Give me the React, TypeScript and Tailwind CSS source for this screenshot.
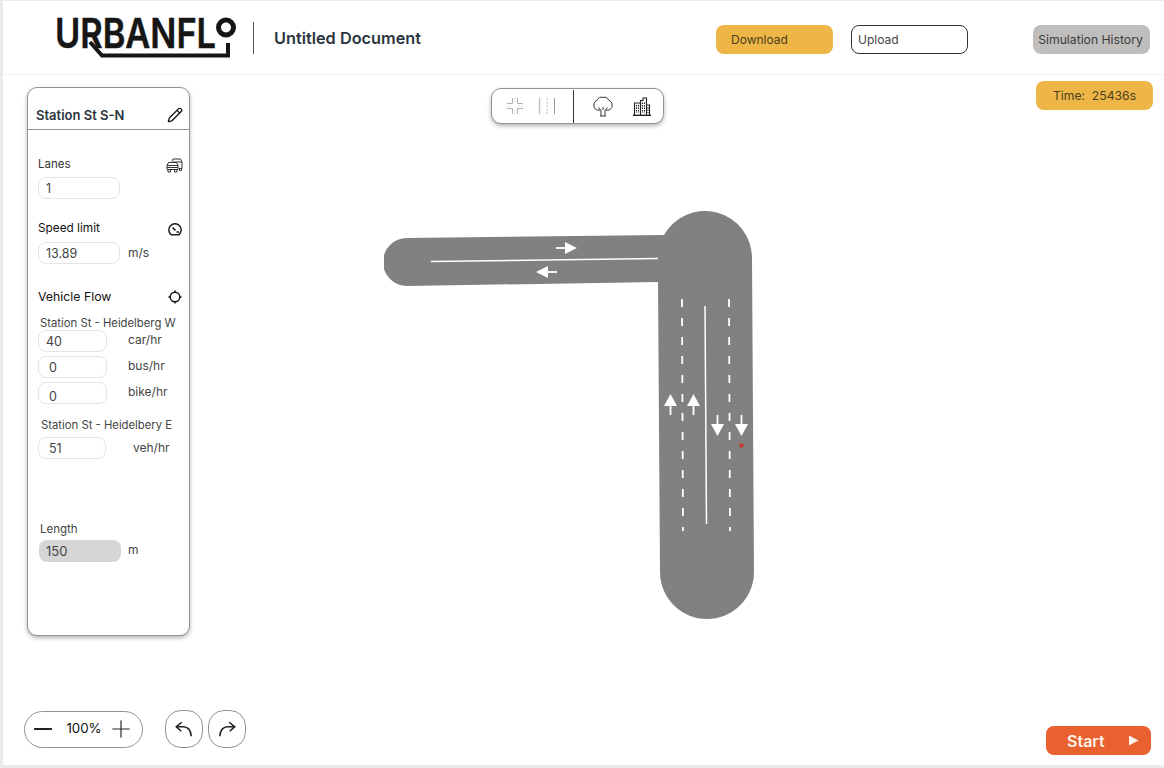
import { Minus, Pencil, Plus } from "lucide-react";

function Logo() {
  return (
    <svg width="190" height="52" viewBox="50 13 190 52" className="shrink-0 overflow-visible">
      <text
        x="55"
        y="49"
        fontFamily="Inter, sans-serif"
        fontSize="41"
        fontWeight="600"
        textLength="161"
        lengthAdjust="spacingAndGlyphs"
        fill="#161616"
        stroke="#161616"
        strokeWidth="0.500"
      >
        URBANFL
      </text>
      <circle cx="226" cy="28.500" r="7.500" fill="none" stroke="#161616" strokeWidth="5" />
      <path d="M90 43 L102 56.500 H228 V44" fill="none" stroke="#161616" strokeWidth="4" />
    </svg>
  );
}

function CarsIcon() {
  return (
    <svg width="17" height="15" viewBox="0 0 17 15" fill="none" stroke="#333" strokeWidth="1">
      <path d="M6 3.500 L7 1 H14.500 L16 4 V10.500 H13" />
      <path d="M13.500 10.500 V12.500 H15.500 V10.500 M7 4 H16" />
      <path d="M1 7.500 L2.500 4.500 H10.500 L12 7.500 V11.500 H1 Z" fill="#fff" />
      <path d="M1 7.500 H12 M1 9.500 H12" />
      <path d="M2 11.500 V14 H4.500 V11.500 M8.500 11.500 V14 H11 V11.500" />
    </svg>
  );
}

function GaugeIcon() {
  return (
    <svg width="14" height="13" viewBox="0 0 14 13" fill="none" stroke="#222" strokeWidth="1.500">
      <path d="M3.200 11.800 H10.800 A6.200 6.200 0 1 0 3.200 11.800 Z" />
      <path d="M4.500 4.500 L7.500 7.500" strokeWidth="1.700" />
      <path d="M8.500 9 H11" />
    </svg>
  );
}

function CrosshairIcon() {
  return (
    <svg width="14" height="14" viewBox="0 0 14 14" fill="none" stroke="#111" strokeWidth="1.400">
      <circle cx="7" cy="7" r="4.800" />
      <path d="M7 0.500 V2.500 M7 11.500 V13.500 M0.500 7 H2.500 M11.500 7 H13.500" />
    </svg>
  );
}

function JunctionIcon() {
  return (
    <svg width="16" height="16" viewBox="0 0 16 16" fill="none" stroke="#b0b0b0" strokeWidth="1">
      <path d="M5.500 0 V5.500 H0 M10.500 0 V5.500 H16 M5.500 16 V10.500 H0 M10.500 16 V10.500 H16" />
      <path d="M8 0 V4 M8 12 V16 M0 8 H4 M12 8 H16" strokeDasharray="1.500 1" stroke="#d0d0d0" />
    </svg>
  );
}

function LanesIcon() {
  return (
    <svg width="18" height="18" viewBox="0 0 18 18" fill="none" stroke="#bdbdbd" strokeWidth="1">
      <path d="M1.500 1 V17" strokeWidth="1.300" />
      <path d="M9 1 V17" strokeDasharray="2 1.500" />
      <path d="M16.500 1 V17" stroke="#9a9a9a" />
    </svg>
  );
}

function TreeIcon() {
  return (
    <svg width="20" height="21" viewBox="0 0 20 21" fill="none" stroke="#333" strokeWidth="1">
      <path d="M7.500 14 C3 15 0.500 12 1 9 C0.500 6.500 3 4.500 4.500 4 C5 1.500 8 0.500 10 1.500 C12.500 0.500 15 2 15.500 4 C18 5 19.500 7.500 19 9.500 C19.500 12.500 16 15 12.500 14" />
      <path d="M8 20 V14.500 L5.500 11.500 M12 20 V14.500 L14.500 11.500 M7 20 H13 M10 14 V11" />
    </svg>
  );
}

function BuildingsIcon() {
  return (
    <svg width="18" height="19" viewBox="0 0 18 19" fill="none" stroke="#222" strokeWidth="1.100">
      <path d="M1.500 18 V6 H7.500 V18" />
      <path d="M7.500 10 V3.500 H10 V1 H13.500 V18" />
      <path d="M13.500 8 H16.500 V18" />
      <path d="M0 18.300 H18" strokeWidth="1.400" />
      <path d="M3.500 8 V16 M5.500 8 V16 M9.500 5.500 V16 M11.500 5.500 V16 M15 10 V16" strokeDasharray="1.500 1" />
    </svg>
  );
}

function UndoIcon({ flip }: { flip?: boolean }) {
  return (
    <svg
      width="18"
      height="18"
      viewBox="0 0 20 20"
      fill="none"
      stroke="#222"
      strokeWidth="1.800"
      className={flip ? "-scale-x-100" : ""}
    >
      <path d="M7.500 2.500 L1.500 7.500 L7 12.500" />
      <path d="M1.500 7.500 H9 C14 7.500 17.500 11 18 18" />
    </svg>
  );
}

function UpArrow({ x, y, down }: { x: number; y: number; down?: boolean }) {
  // arrow drawn upward from its tip, flipped for the other carriageway
  const d = down ? 1 : -1;
  return (
    <g fill="#fff" stroke="none">
      <path d={`M${x} ${y} L${x - 6.5} ${y - d * 12} H${x + 6.5} Z`} />
      <rect x={x - 0.9} y={down ? y - 21 : y + 11} width="1.800" height="10" />
    </g>
  );
}

function Road() {
  return (
    <svg width="372" height="410" viewBox="384 211 372 410" className="shrink-0">
      <path
        d="M407 238 L664 235 A47 47 0 0 1 752 258 L754 572 A47 47 0 0 1 660 572 L658 282 L407 286 A24 24 0 0 1 407 238 Z"
        fill="#818181"
      />
      <path d="M431 261.500 L658 258.500" stroke="#fff" strokeWidth="1.500" />
      <path d="M556 248 H566" stroke="#fff" strokeWidth="1.800" />
      <path d="M577 248 L565 242 V254 Z" fill="#fff" />
      <path d="M547 272 H557" stroke="#fff" strokeWidth="1.800" />
      <path d="M536 272 L548 266 V278 Z" fill="#fff" />
      <path d="M705 306 L706.500 524" stroke="#fff" strokeWidth="1.500" />
      <path d="M682 299 L683 531" stroke="#fff" strokeWidth="1.800" strokeDasharray="8 11" />
      <path d="M729 299 L730 531" stroke="#fff" strokeWidth="1.800" strokeDasharray="8 11" />
      <UpArrow x={670.5} y={394} />
      <UpArrow x={693.5} y={394} />
      <UpArrow x={717.5} y={436} down />
      <UpArrow x={741.5} y={436} down />
      <circle cx="741.500" cy="445.500" r="2.200" fill="#c0392b" />
    </svg>
  );
}

function Field({
  value,
  className,
  unit,
  unitClass,
}: {
  value: string;
  className: string;
  unit?: string;
  unitClass?: string;
}) {
  return (
    <div className="flex items-center">
      <div
        className={`flex h-[22px] items-center rounded-[8px] border border-[#e4e4e4] pl-[7px] pt-[2px] text-[12.500px] text-[#444] ${className}`}
      >
        {value}
      </div>
      {unit ? <span className={`text-[12px] text-[#444] ${unitClass}`}>{unit}</span> : null}
    </div>
  );
}

function PropertiesPanel() {
  return (
    <aside className="ml-[24px] mt-[12px] h-[549px] w-[163px] rounded-[10px] border border-[#8f9497] bg-white shadow-[0_2px_4px_rgba(0,0,0,0.3)]">
      <div className="flex h-[42px] items-end justify-between border-b border-[#8f9497] pb-[4px] pl-[8px] pr-[6px]">
        <h3 className="text-[13px] font-semibold leading-5 text-[#2b3540]">Station St S-N</h3>
        <Pencil size={16} strokeWidth={1.900} color="#111" className="mb-[2px]" />
      </div>

      <div className="pl-[10px] pr-[6px]">
        <div className="mt-[27px] flex h-[16px] items-center justify-between">
          <span className="text-[11.500px] text-[#333]">Lanes</span>
          <CarsIcon />
        </div>
        <div className="mt-[4px]">
          <Field value="1" className="w-[82px]" />
        </div>

        <div className="mt-[22px] flex h-[16px] items-center justify-between pr-px">
          <span className="text-[11.800px] text-[#111]">Speed limit</span>
          <GaugeIcon />
        </div>
        <div className="mt-[5px]">
          <Field value="13.89" className="w-[82px]" unit="m/s" unitClass="ml-2" />
        </div>

        <div className="mt-[24px] flex h-[18px] items-center justify-between pr-px">
          <span className="text-[12.300px] text-[#111]">Vehicle Flow</span>
          <CrosshairIcon />
        </div>
        <p className="ml-[2px] mt-[10px] h-[14px] text-[11.300px] leading-[14px] text-[#444]">
          Station St - Heidelberg W
        </p>
        <div className="flex flex-col gap-[4px]">
          <Field value="40" className="w-[69px]" unit="car/hr" unitClass="-mt-[3px] ml-[21px]" />
          <Field value="0" className="w-[69px] pl-[10px]" unit="bus/hr" unitClass="-mt-[3px] ml-[21px]" />
          <Field value="0" className="w-[69px] pl-[10px] pt-[8px]" unit="bike/hr" unitClass="-mt-[3px] ml-[21px]" />
        </div>
        <p className="ml-[3px] mt-[14px] h-[14px] text-[11.300px] leading-[14px] text-[#444]">
          Station St - Heidelbery E
        </p>
        <div className="mt-[5px]">
          <Field value="51" className="w-[68px] pl-[10px]" unit="veh/hr" unitClass="ml-[27px]" />
        </div>

        <p className="ml-[2px] mt-[62px] h-[16px] text-[11.500px] leading-[16px] text-[#444]">Length</p>
        <div className="ml-px mt-[3px] flex items-center">
          <div className="flex h-[22px] w-[82px] items-center rounded-[8px] bg-[#d6d6d6] pl-[7px] pt-[2px] text-[13px] text-[#444]">
            150
          </div>
          <span className="-mt-[3px] ml-[7px] text-[12px] text-[#444]">m</span>
        </div>
      </div>
    </aside>
  );
}

export default function App() {
  return (
    <div className="h-[768px] w-[1164px] overflow-hidden bg-[#ebebeb] pb-[3px] pl-[3px] pt-px font-['Inter',sans-serif]">
      <div className="flex h-full flex-col bg-white">
        <header className="flex h-[74px] shrink-0 items-center border-b border-[#f0f0f0]">
          <div className="ml-[47px]">
            <Logo />
          </div>
          <div className="ml-[13px] h-[32px] w-px bg-[#555]" />
          <h1 className="ml-[20px] mt-[2px] text-[16.300px] font-semibold text-[#2b3540]">Untitled Document</h1>
          <button
            type="button"
            className="ml-[295px] mt-[4px] h-[29px] w-[117px] rounded-[8px] bg-[#eeb646] pl-[15px] text-left text-[12px] text-[#4a4020]"
          >
            Download
          </button>
          <button
            type="button"
            className="ml-[18px] mt-[4px] h-[29px] w-[117px] rounded-[8px] border border-[#333] pl-[6px] text-left text-[12px] text-[#444]"
          >
            Upload
          </button>
          <button
            type="button"
            className="ml-[65px] mt-[4px] h-[29px] w-[117px] rounded-[8px] bg-[#bfbebc] pr-[2px] pt-[2px] text-center text-[12.200px] text-[#3c3c3c]"
          >
            Simulation History
          </button>
        </header>

        <main className="flex min-h-0 flex-1">
          <div className="flex w-[300px] shrink-0 flex-col justify-between pb-[17px]">
            <PropertiesPanel />
            <div className="ml-[21px] flex items-center">
              <div className="flex h-[37px] w-[119px] items-center justify-between rounded-full border border-[#8f9497] pl-[4px] pr-[7px]">
                <Minus size={28} strokeWidth={1.700} color="#222" />
                <span className="ml-[4px] text-[13.300px] text-[#111]">100%</span>
                <Plus size={28} strokeWidth={1} color="#222" />
              </div>
              <button
                type="button"
                className="ml-[22px] flex size-[38px] items-center justify-center rounded-[16px] border border-[#8f9497]"
              >
                <UndoIcon />
              </button>
              <button
                type="button"
                className="ml-[5px] flex size-[38px] items-center justify-center rounded-[16px] border border-[#8f9497]"
              >
                <UndoIcon flip />
              </button>
            </div>
          </div>

          <div className="w-[500px] shrink-0">
            <div className="ml-[188px] mt-[13px] flex h-[36px] w-[173px] items-center rounded-[10px] border border-[#8f9497] bg-white shadow-[0_2px_4px_rgba(0,0,0,0.3)]">
              <div className="ml-[15px]">
                <JunctionIcon />
              </div>
              <div className="ml-[15px]">
                <LanesIcon />
              </div>
              <div className="ml-[17px] h-[33px] w-px bg-[#333]" />
              <div className="ml-[19px]">
                <TreeIcon />
              </div>
              <div className="ml-[20px]">
                <BuildingsIcon />
              </div>
            </div>
            <div className="ml-[81px] mt-[87px]">
              <Road />
            </div>
          </div>

          <div className="flex flex-1 flex-col items-end justify-between pb-[10px] pr-[11px] pt-[6px]">
            <div className="flex h-[29px] w-[117px] items-center justify-center whitespace-pre rounded-[8px] bg-[#eeb646] pt-px text-[12.200px] text-[#4a4020]">
              Time:  25436s
            </div>
            <button
              type="button"
              className="mr-[2px] flex h-[29px] w-[105px] items-center rounded-[8px] bg-[#e8612f] pl-[21px] text-[16px] font-semibold text-[#fff3ea]"
            >
              Start
              <svg width="11" height="11" viewBox="0 0 11 11" className="ml-[23px]">
                <path d="M1 0.500 L10.500 5.500 L1 10.500 Z" fill="#fff3ea" />
              </svg>
            </button>
          </div>
        </main>
      </div>
    </div>
  );
}
